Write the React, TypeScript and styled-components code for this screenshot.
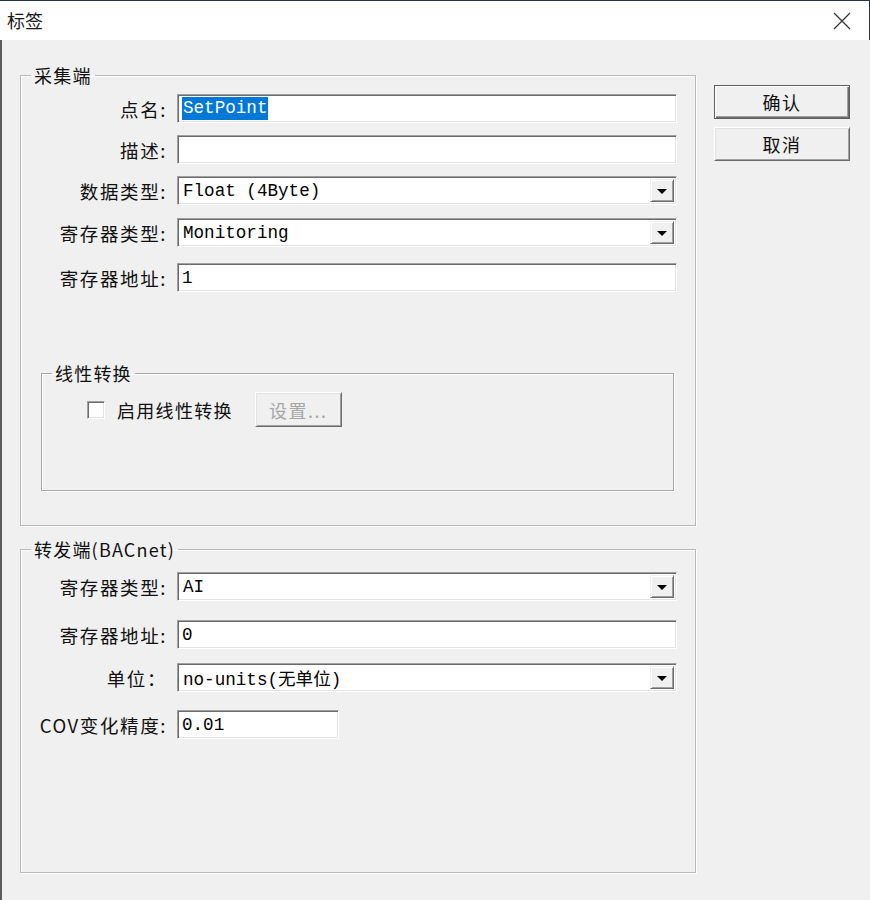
import React from 'react'
import styled, { createGlobalStyle } from 'styled-components'

const GlobalStyle = createGlobalStyle`
  html, body {
    margin: 0;
    padding: 0;
    background: #f0f0f0;
  }
`

const cjk = `"Noto Sans CJK SC", "Noto Sans", sans-serif`
const mono = `"Liberation Mono", "Noto Sans CJK SC", monospace`

export default function App() {
  return (
    <Window>
      <GlobalStyle />
      <TitleBar>
        <Title>标签</Title>
        <CloseButton aria-label="关闭">
          <svg width="18" height="18" viewBox="0 0 18 18">
            <path d="M1 1 L17 17 M17 1 L1 17" stroke="#333" strokeWidth="1.2" fill="none" />
          </svg>
        </CloseButton>
      </TitleBar>

      <Body>
        <Groups>
          <Group $height={461}>
            <Legend>采集端</Legend>
            <Row>
              <Label>点名:</Label>
              <Field>
                <Selected>SetPoint</Selected>
              </Field>
            </Row>
            <Row $mt={12}>
              <Label>描述:</Label>
              <Field />
            </Row>
            <Row $mt={12}>
              <Label>数据类型:</Label>
              <Combo value="Float (4Byte)" />
            </Row>
            <Row $mt={13}>
              <Label>寄存器类型:</Label>
              <Combo value="Monitoring" />
            </Row>
            <Row $mt={16}>
              <Label>寄存器地址:</Label>
              <Field>1</Field>
            </Row>

            <InnerGroup>
              <Legend>线性转换</Legend>
              <CheckRow>
                <CheckBox />
                <CheckLabel>启用线性转换</CheckLabel>
                <Button $width={87} $height={35} disabled>
                  设置...
                </Button>
              </CheckRow>
            </InnerGroup>
          </Group>

          <Group $height={334}>
            <Legend>转发端(BACnet)</Legend>
            <Row $mt={4}>
              <Label>寄存器类型:</Label>
              <Combo value="AI" />
            </Row>
            <Row $mt={19}>
              <Label>寄存器地址:</Label>
              <Field>0</Field>
            </Row>
            <Row $mt={14}>
              <Label>单位：</Label>
              <Combo value="no-units(无单位)" />
            </Row>
            <Row $mt={18}>
              <Label>COV变化精度:</Label>
              <Field $width={162}>0.01</Field>
            </Row>
          </Group>
        </Groups>

        <Actions>
          <Button $default>确认</Button>
          <Button>取消</Button>
        </Actions>
      </Body>
    </Window>
  )
}

function Combo({ value }: { value: string }) {
  return (
    <Field>
      <ComboText>{value}</ComboText>
      <DropButton>
        <Arrow />
      </DropButton>
    </Field>
  )
}

const Window = styled.div`
  width: 870px;
  height: 900px;
  display: flex;
  flex-direction: column;
  background: #f0f0f0;
  overflow: hidden;
`

const TitleBar = styled.div`
  box-sizing: border-box;
  height: 40px;
  display: flex;
  align-items: center;
  justify-content: space-between;
  padding: 0 0 0 7px;
  background: #fff;
  border-top: 1px solid #22314d;
  border-right: 1px solid #22314d;
`

const Title = styled.div`
  font-family: ${cjk};
  font-size: 18px;
  color: #1a1a1a;
  margin-top: -1px;
`

const CloseButton = styled.div`
  width: 52px;
  height: 39px;
  display: flex;
  align-items: center;
  justify-content: center;
  margin-right: 1px;
`

const Body = styled.div`
  flex: 1;
  display: flex;
  align-items: flex-start;
  padding: 25px 0 0 18px;
  border-left: 2px solid #5c5c5c;
`

const Groups = styled.div`
  display: flex;
  flex-direction: column;
  gap: 13px;
  width: 676px;
`

const Group = styled.fieldset<{ $height: number }>`
  box-sizing: border-box;
  height: ${p => p.$height}px;
  margin: 0;
  padding: 9px 18px 0 0;
  min-width: 0;
  border: 1px solid #b9b9b9;
  box-shadow: 1px 1px 0 #fff, inset 1px 1px 0 #fff;
  display: flex;
  flex-direction: column;
`

const InnerGroup = styled.fieldset`
  box-sizing: border-box;
  height: 128px;
  margin: 71px 3px 0 20px;
  padding: 9px 0 0 0;
  min-width: 0;
  border: 1px solid #a8a8a8;
  box-shadow: 1px 1px 0 #fff, inset 1px 1px 0 #fff;
`

const Legend = styled.legend`
  margin-left: 10px;
  padding: 0 3px;
  height: 20px;
  line-height: 20px;
  font-family: ${cjk};
  font-size: 18px;
  letter-spacing: 1.2px;
  color: #111;
`

const Row = styled.div<{ $mt?: number }>`
  display: flex;
  align-items: center;
  margin-top: ${p => p.$mt ?? 0}px;
`

const Label = styled.div`
  width: 146px;
  margin-right: 10px;
  text-align: right;
  font-family: ${cjk};
  font-size: 18.5px;
  letter-spacing: 1.6px;
  color: #111;
  white-space: nowrap;
`

const Field = styled.div<{ $width?: number }>`
  box-sizing: border-box;
  width: ${p => p.$width ?? 500}px;
  height: 29px;
  display: flex;
  align-items: center;
  padding: 2px 2px 2px 4px;
  background: #fff;
  border: 1px solid;
  border-color: #a0a0a0 #ffffff #ffffff #a0a0a0;
  box-shadow: inset 1px 1px 0 #6b6b6b, inset -1px -1px 0 #e3e3e3;
  font-family: ${mono};
  font-size: 17.6px;
  color: #000;
  white-space: nowrap;
`

const Selected = styled.span`
  background: #0078d7;
  color: #fff;
  padding: 1px 1px 2px;
`

const ComboText = styled.span`
  flex: 1;
  padding-left: 1px;
`

const DropButton = styled.div`
  box-sizing: border-box;
  width: 24px;
  height: 100%;
  display: flex;
  align-items: center;
  justify-content: center;
  background: #f0f0f0;
  border: 1px solid;
  border-color: #f0f0f0 #6b6b6b #6b6b6b #f0f0f0;
  box-shadow: inset 1px 1px 0 #fff, inset -1px -1px 0 #a0a0a0;
`

const Arrow = styled.span`
  width: 0;
  height: 0;
  border-left: 5px solid transparent;
  border-right: 5px solid transparent;
  border-top: 5px solid #000;
  margin-top: 1px;
`

const CheckRow = styled.div`
  display: flex;
  align-items: center;
  padding-left: 45px;
`

const CheckBox = styled.div`
  box-sizing: border-box;
  width: 18px;
  height: 18px;
  background: #fff;
  border: 1px solid;
  border-color: #a0a0a0 #ffffff #ffffff #a0a0a0;
  box-shadow: inset 1px 1px 0 #6b6b6b, inset -1px -1px 0 #e3e3e3;
`

const CheckLabel = styled.div`
  margin: 0 22px 0 12px;
  font-family: ${cjk};
  font-size: 18px;
  letter-spacing: 1.3px;
  color: #111;
`

const Actions = styled.div`
  display: flex;
  flex-direction: column;
  gap: 8px;
  margin: 20px 0 0 18px;
`

const Button = styled.button<{ $width?: number; $height?: number; $default?: boolean }>`
  box-sizing: border-box;
  width: ${p => p.$width ?? 136}px;
  height: ${p => p.$height ?? 34}px;
  padding: 0;
  background: #f0f0f0;
  border: 1px solid;
  border-color: ${p => (p.$default ? '#5e5e5e' : '#fff #6b6b6b #6b6b6b #fff')};
  box-shadow: ${p =>
    p.$default
      ? 'inset 1px 1px 0 #fff, inset -1px -1px 0 #6b6b6b, inset -2px -2px 0 #a0a0a0'
      : 'inset 1px 1px 0 #e3e3e3, inset -1px -1px 0 #a0a0a0'};
  font-family: ${cjk};
  font-size: 18px;
  letter-spacing: 1.5px;
  color: #111;

  &:disabled {
    color: #a6a6a6;
  }
`
